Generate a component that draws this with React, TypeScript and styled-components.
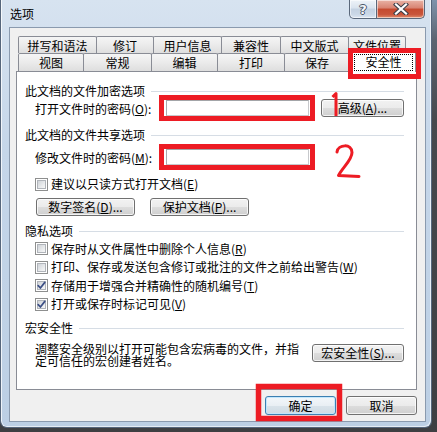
import React from 'react';
import styled, { createGlobalStyle } from 'styled-components';

const GlobalStyle = createGlobalStyle`
  html, body { margin: 0; padding: 0; }
  body {
    width: 437px; height: 432px; overflow: hidden;
    background: #45474b;
    font-family: "Noto Sans CJK SC", "Noto Sans", sans-serif;
    font-size: 12px; color: #000;
  }
`;

const Stage = styled.div`
  position: relative;
  width: 437px;
  height: 432px;
  background: linear-gradient(to bottom, #7f93ab 0px, #5c6470 40px, #47494d 120px, #3e3f42 100%);
`;

const Window = styled.div`
  box-sizing: border-box;
  width: 432px;
  height: 428px;
  border: 1px solid #56667b;
  border-top: 0;
  border-radius: 0 0 7px 7px;
  background: linear-gradient(to bottom, #d7e3f0 0%, #c5d6e9 35%, #bccfe4 100%);
  box-shadow: inset 1px 0 0 rgba(255,255,255,0.75), inset -1px -1px 0 rgba(255,255,255,0.6);
  padding: 0 5px 5px 8px;
  display: flex;
  flex-direction: column;
`;

const TitleBar = styled.div`
  height: 27px;
  display: flex;
  justify-content: space-between;
  align-items: flex-start;
`;

const Title = styled.div`
  margin: 6px 0 0 1px;
  line-height: 16px;
  font-size: 12px;
  color: #000;
`;

const Captions = styled.div`
  display: flex;
  margin-right: 1px;
`;

const CaptionButton = styled.div<{ $close?: boolean }>`
  box-sizing: border-box;
  width: ${p => (p.$close ? 48 : 28)}px;
  height: 19px;
  border: 1px solid #5a687b;
  border-top: 0;
  ${p => (p.$close ? 'border-left: 0;' : '')}
  border-radius: ${p => (p.$close ? '0 0 5px 0' : '0 0 0 5px')};
  background: ${p =>
    p.$close
      ? 'linear-gradient(to bottom, #e9b3a6 0%, #d88371 45%, #c54a2f 50%, #c9553b 80%, #e08d6c 100%)'
      : 'linear-gradient(to bottom, #eef3f8 0%, #d9e3ee 45%, #c3d1e1 50%, #cbd8e7 80%, #dde7f2 100%)'};
  box-shadow: inset 0 0 0 1px rgba(255,255,255,0.55);
  display: flex;
  align-items: center;
  justify-content: center;
`;

const HelpGlyph = styled.span`
  font-family: "DejaVu Sans", sans-serif;
  font-weight: bold;
  font-size: 13px;
  line-height: 13px;
  color: #f4f6f9;
  text-shadow: 1px 0 0 #4a5668, -1px 0 0 #4a5668, 0 1px 0 #4a5668, 0 -1px 0 #4a5668;
`;

const Client = styled.div`
  flex: 1;
  border: 1px solid #8a9aae;
  background: #f0f0f0;
  padding: 8px 8px 6px 6px;
  display: flex;
  flex-direction: column;
`;

const TabStrip = styled.div`
  margin-left: 2px;
  display: flex;
  flex-direction: column;
`;

const TabRow = styled.div<{ $h: number }>`
  display: flex;
  align-items: flex-end;
  height: ${p => p.$h}px;
`;

const Tab = styled.div<{ $w: number; $h: number }>`
  box-sizing: border-box;
  width: ${p => p.$w}px;
  height: ${p => p.$h}px;
  border: 1px solid #898c95;
  border-bottom: 0;
  border-radius: 2px 2px 0 0;
  background: linear-gradient(to bottom, #f5f5f5 0%, #ebebeb 50%, #dedede 100%);
  display: flex;
  justify-content: center;
  padding-top: 1px;
  line-height: 15px;
  & + & { margin-left: -1px; }
`;

const ActiveTab = styled.div<{ $w: number }>`
  position: relative;
  z-index: 1;
  box-sizing: border-box;
  width: ${p => p.$w}px;
  height: 21px;
  margin-left: -1px;
  margin-bottom: -1px;
  border: 1px solid #898c95;
  border-bottom: 0;
  border-radius: 2px 2px 0 0;
  background: #fff;
  padding: 2px 0 0 4px;
`;

const FocusRect = styled.span`
  box-sizing: border-box;
  display: block;
  width: 59px;
  height: 17px;
  border: 1px dotted #000;
  text-align: center;
  line-height: 14px;
`;

const Panel = styled.div`
  box-sizing: border-box;
  height: 319px;
  border: 1px solid #898c95;
  background: #fff;
  padding: 12px 12px 0 8px;
  display: flex;
  flex-direction: column;
`;

const SectionHeader = styled.div<{ $mt: number }>`
  display: flex;
  align-items: center;
  height: 14px;
  line-height: 14px;
  margin-top: ${p => p.$mt}px;
  white-space: nowrap;
  &::after {
    content: "";
    flex: 1;
    height: 1px;
    margin: 1px 0 0 6px;
    background: #d6dde5;
  }
`;

const FieldRow = styled.div<{ $mt: number }>`
  display: flex;
  align-items: center;
  height: 17px;
  margin-top: ${p => p.$mt}px;
  padding-left: 10px;
`;

const FieldLabel = styled.span`
  width: 131px;
  padding-top: 3px;
  line-height: 14px;
  white-space: nowrap;
`;

const PasswordBox = styled.input`
  box-sizing: border-box;
  width: 143px;
  height: 16px;
  margin: 1px 0 0;
  padding: 0;
  border: 1px solid #c7c9cc;
  border-top-color: #a3a5a8;
  border-left-color: #a9abae;
  background: #fff;
  outline: none;
`;

const Button = styled.button<{ $w: number; $h?: number; $default?: boolean }>`
  box-sizing: border-box;
  width: ${p => p.$w}px;
  height: ${p => p.$h ?? 18}px;
  margin: 0;
  padding: 0;
  border: 1px solid ${p => (p.$default ? '#3c7fb1' : '#707070')};
  border-radius: 3px;
  background: ${p =>
    p.$default
      ? 'linear-gradient(to bottom, #f3f7fa 0%, #e9eff4 50%, #d9e3ea 51%, #cfdbe4 100%)'
      : 'linear-gradient(to bottom, #f2f2f2 0%, #ebebeb 50%, #dddddd 51%, #cfcfcf 100%)'};
  box-shadow: inset 0 0 0 1px ${p => (p.$default ? 'rgba(190,230,253,0.9)' : 'rgba(255,255,255,0.75)')};
  font-family: inherit;
  font-size: 12px;
  line-height: 15px;
  color: #000;
  white-space: nowrap;
  flex-shrink: 0;
`;

const PushRight = styled.div`
  margin-left: auto;
  display: flex;
`;

const CheckRow = styled.div<{ $mt?: number }>`
  display: flex;
  align-items: center;
  gap: 3px;
  height: 18.5px;
  margin-top: ${p => p.$mt ?? 0}px;
  padding-left: 10px;
  line-height: 14px;
  white-space: nowrap;
`;

const CheckList = styled.div`
  display: flex;
  flex-direction: column;
  margin-top: 2px;
`;

const BoxOuter = styled.span`
  box-sizing: border-box;
  width: 13px;
  height: 13px;
  border: 1px solid #8e8f8f;
  background: #fff;
  padding: 1px;
  display: flex;
  flex-shrink: 0;
`;

const BoxInner = styled.span`
  position: relative;
  flex: 1;
  border: 1px solid #b0b4ba;
  background: linear-gradient(135deg, #cfd3d8 0%, #e8eaec 60%, #f7f7f7 100%);
  display: flex;
  align-items: center;
  justify-content: center;
`;

const CheckMark = styled.svg`
  position: absolute;
  left: -2px;
  top: -2px;
`;

const ButtonRow = styled.div<{ $mt: number }>`
  display: flex;
  gap: 15px;
  margin-top: ${p => p.$mt}px;
  padding-left: 11px;
`;

const MacroRow = styled.div`
  display: flex;
  align-items: flex-start;
  margin-top: 8px;
  padding-left: 10px;
`;

const MacroText = styled.div`
  display: flex;
  flex-direction: column;
  white-space: nowrap;
`;

const MacroLine = styled.span`
  display: block;
  height: 12px;
  line-height: 12px;
`;

const MacroButton = styled(PushRight)`
  padding-top: 1px;
`;

const DialogButtons = styled.div`
  display: flex;
  justify-content: flex-end;
  gap: 10px;
  margin-top: 6px;
`;

const Overlay = styled.svg`
  position: absolute;
  left: 0;
  top: 0;
  pointer-events: none;
  z-index: 5;
`;

const Checkbox: React.FC<{ checked?: boolean }> = ({ checked }) => (
  <BoxOuter>
    <BoxInner>
      {checked && (
        <CheckMark width="11" height="11" viewBox="0 0 11 11">
          <path d="M2.2 5.6 L4.4 8 L8.8 2.4" fill="none" stroke="#3c4f85" strokeWidth="1.7" strokeLinecap="round" strokeLinejoin="round" />
        </CheckMark>
      )}
    </BoxInner>
  </BoxOuter>
);

const topTabs = [
  { label: '拼写和语法', w: 79 },
  { label: '修订', w: 58 },
  { label: '用户信息', w: 69 },
  { label: '兼容性', w: 60 },
  { label: '中文版式', w: 69 },
  { label: '文件位置', w: 58 },
];

const bottomTabs = [
  { label: '视图', w: 66 },
  { label: '常规', w: 69 },
  { label: '编辑', w: 67 },
  { label: '打印', w: 68 },
  { label: '保存', w: 66 },
];

const privacy = [
  { text: '保存时从文件属性中删除个人信息', key: 'R', checked: false },
  { text: '打印、保存或发送包含修订或批注的文件之前给出警告', key: 'W', checked: false },
  { text: '存储用于增强合并精确性的随机编号', key: 'T', checked: true },
  { text: '打开或保存时标记可见', key: 'V', checked: true },
];

export default function App() {
  return (
    <Stage>
      <GlobalStyle />
      <Window>
        <TitleBar>
          <Title>选项</Title>
          <Captions>
            <CaptionButton>
              <HelpGlyph>?</HelpGlyph>
            </CaptionButton>
            <CaptionButton $close>
              <svg width="16" height="12" viewBox="0 0 16 12">
                <path d="M3 1.5 L13 10.5 M13 1.5 L3 10.5" stroke="#3b3f48" strokeWidth="4.2" strokeLinecap="square" />
                <path d="M3 1.5 L13 10.5 M13 1.5 L3 10.5" stroke="#ffffff" strokeWidth="2.2" strokeLinecap="square" />
              </svg>
            </CaptionButton>
          </Captions>
        </TitleBar>
        <Client>
          <TabStrip>
            <TabRow $h={17}>
              {topTabs.map(t => (
                <Tab key={t.label} $w={t.w} $h={17}>{t.label}</Tab>
              ))}
            </TabRow>
            <TabRow $h={18}>
              {bottomTabs.map(t => (
                <Tab key={t.label} $w={t.w} $h={18}>{t.label}</Tab>
              ))}
              <ActiveTab $w={67}>
                <FocusRect>安全性</FocusRect>
              </ActiveTab>
            </TabRow>
          </TabStrip>
          <Panel>
            <SectionHeader $mt={0}>此文档的文件加密选项</SectionHeader>
            <FieldRow $mt={1}>
              <FieldLabel>打开文件时的密码(<u>O</u>):</FieldLabel>
              <PasswordBox type="password" readOnly />
              <PushRight>
                <Button $w={83}>高级(<u>A</u>)...</Button>
              </PushRight>
            </FieldRow>
            <SectionHeader $mt={12}>此文档的文件共享选项</SectionHeader>
            <FieldRow $mt={6}>
              <FieldLabel>修改文件时的密码(<u>M</u>):</FieldLabel>
              <PasswordBox type="password" readOnly />
            </FieldRow>
            <CheckRow $mt={10}>
              <Checkbox />
              <span>建议以只读方式打开文档(<u>E</u>)</span>
            </CheckRow>
            <ButtonRow $mt={4}>
              <Button $w={99}>数字签名(<u>D</u>)...</Button>
              <Button $w={99}>保护文档(<u>P</u>)...</Button>
            </ButtonRow>
            <SectionHeader $mt={8}>隐私选项</SectionHeader>
            <CheckList>
              {privacy.map(p => (
                <CheckRow key={p.key}>
                  <Checkbox checked={p.checked} />
                  <span>{p.text}(<u>{p.key}</u>)</span>
                </CheckRow>
              ))}
            </CheckList>
            <SectionHeader $mt={7}>宏安全性</SectionHeader>
            <MacroRow>
              <MacroText>
                <MacroLine>调整安全级别以打开可能包含宏病毒的文件，并指</MacroLine>
                <MacroLine>定可信任的宏创建者姓名。</MacroLine>
              </MacroText>
              <MacroButton>
                <Button $w={92}>宏安全性(<u>S</u>)...</Button>
              </MacroButton>
            </MacroRow>
          </Panel>
          <DialogButtons>
            <Button $w={71} $h={19} $default>确定</Button>
            <Button $w={71} $h={19}>取消</Button>
          </DialogButtons>
        </Client>
      </Window>
      <Overlay width="437" height="432" viewBox="0 0 437 432">
        <g fill="none" stroke="#ed1c24">
          <rect x="350.5" y="50.5" width="68" height="26" strokeWidth="5" />
          <rect x="161.5" y="97.5" width="151" height="21" strokeWidth="5" />
          <rect x="161.5" y="146.5" width="151" height="21" strokeWidth="5" />
          <rect x="258.5" y="386.5" width="81" height="32" strokeWidth="5.5" />
          <path d="M332.5 97 L336 93.5 L336 116" strokeWidth="3" strokeLinejoin="round" />
          <path d="M337 152 C338 144.5 352 143 352 152.5 C352 160 343 167 338.5 175.5 L359 176.5" strokeWidth="3" strokeLinejoin="round" strokeLinecap="round" />
        </g>
      </Overlay>
    </Stage>
  );
}
